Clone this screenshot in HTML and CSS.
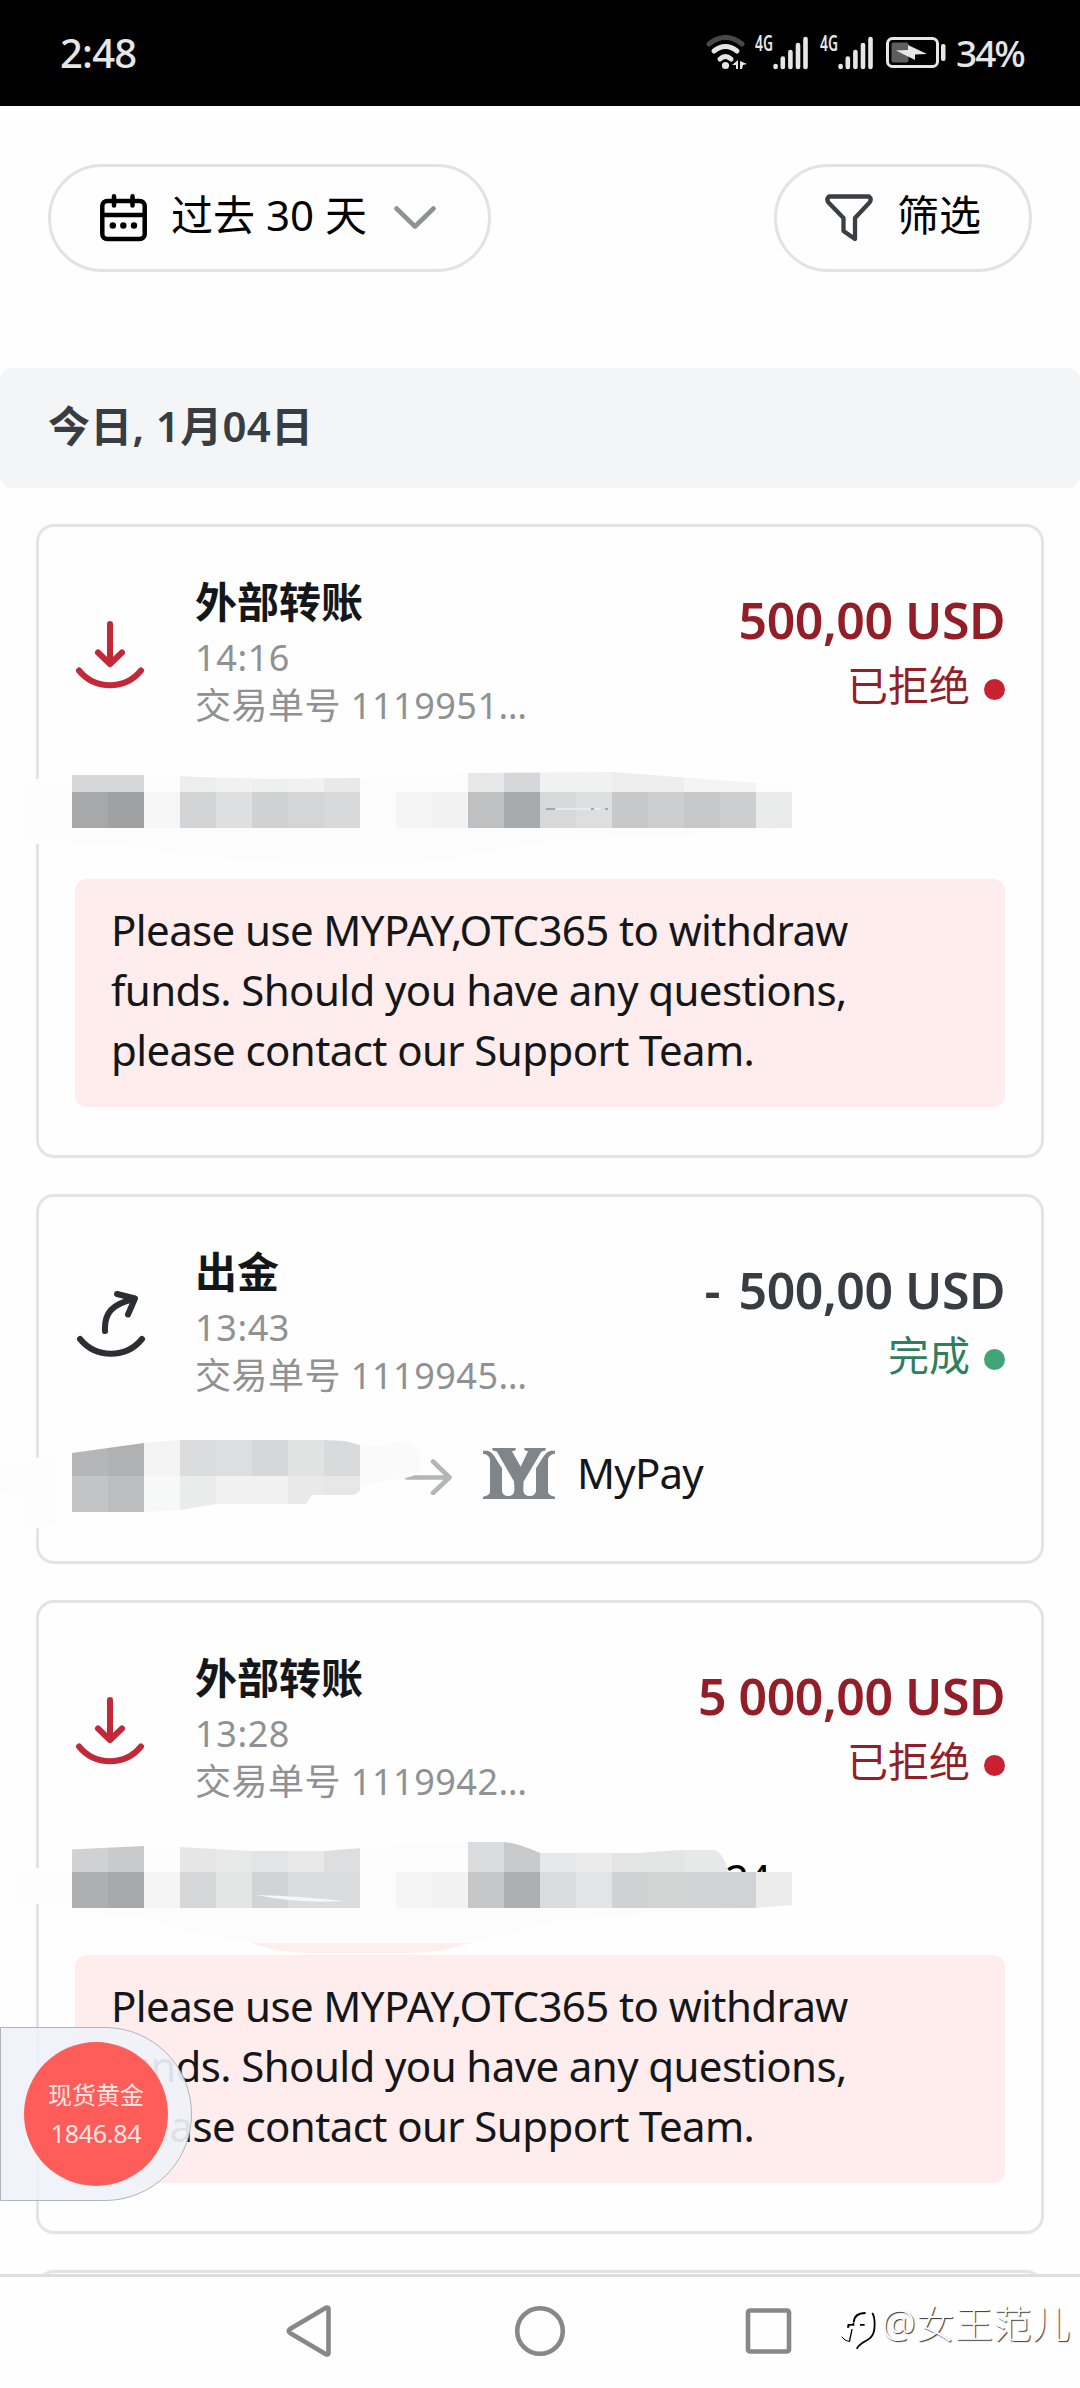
FILE: index.html
```html
<!DOCTYPE html>
<html lang="zh-CN">
<head>
<meta charset="utf-8">
<title>交易记录</title>
<link rel="stylesheet" href="styles.css">
</head>
<body>
<svg class="defs" width="0" height="0" aria-hidden="true">
  <symbol id="incoming" viewBox="0 0 72 72">
    <path d="M36 6V45M24 34.500L36 46L48 34.500M5 52.500A40 40 0 0 0 67 52.500" fill="none" stroke="#c32838" stroke-width="6" stroke-linecap="round" stroke-linejoin="round"/>
  </symbol>
</svg>

<header class="status">
  <span class="clock">2:48</span>
  <div class="indicators">
    <svg class="wifi" viewBox="0 0 42 36" fill="none" stroke-linecap="round">
      <path d="M3 9Q19.500 -4 36 9" stroke="#484848" stroke-width="5"/>
      <path d="M8 16Q19.500 7 31 16M14 24Q19.500 19 25 24" stroke="#e6e6e6" stroke-width="5"/>
      <circle cx="19.500" cy="30.500" r="3.600" fill="#e6e6e6"/>
      <path d="M32 25v9h-2v-4h-4zM34 34v-8l7 3-4 1-1 4z" fill="#e6e6e6"/>
    </svg>
    <svg class="signal" viewBox="0 0 53 36">
      <text x="0" y="16" class="net" textLength="18" lengthAdjust="spacingAndGlyphs">4G</text>
      <path d="M20.600 31v1M27.800 23.500v8.500M35.400 17v15M43 10v22M50.500 4v28" stroke="#e6e6e6" stroke-width="4.600" stroke-linecap="round"/>
    </svg>
    <svg class="signal" viewBox="0 0 53 36">
      <text x="0" y="16" class="net" textLength="18" lengthAdjust="spacingAndGlyphs">4G</text>
      <path d="M20.600 31v1M27.800 23.500v8.500M35.400 17v15M43 10v22M50.500 4v28" stroke="#e6e6e6" stroke-width="4.600" stroke-linecap="round"/>
    </svg>
    <svg class="battery" viewBox="0 0 62 34">
      <rect x="1.500" y="2.500" width="50" height="28" rx="5" fill="none" stroke="#e6e6e6" stroke-width="3"/>
      <rect x="5.500" y="6.500" width="17" height="20" rx="2" fill="#5e5e5e"/>
      <path d="M10 14.500L22 14V9L41 18L29 18.500V24Z" fill="#e6e6e6"/>
      <rect x="55" y="8" width="4.500" height="17" rx="2" fill="#e6e6e6"/>
    </svg>
    <span class="percent">34%</span>
  </div>
</header>

<main class="page">
  <div class="filters">
    <button class="pill range">
      <svg class="calendar" viewBox="0 0 47 48" fill="none" stroke="#000" stroke-width="4.500" stroke-linecap="round">
        <rect x="2.300" y="7" width="42.400" height="38" rx="5"/>
        <path d="M3 21H44M14 2.300V11.500M32.500 2.300V11.500"/>
        <g fill="#000" stroke="none"><circle cx="12.800" cy="31.500" r="3.200"/><circle cx="23.300" cy="31.500" r="3.200"/><circle cx="34" cy="31.500" r="3.200"/></g>
      </svg>
      <span>过去 30 天</span>
      <svg class="chevron" viewBox="0 0 42 24"><path d="M2.500 2.500L21 20.500L39.500 2.500" fill="none" stroke="#8f9192" stroke-width="4.600" stroke-linecap="round" stroke-linejoin="round"/></svg>
    </button>
    <button class="pill pick">
      <svg class="funnel" viewBox="0 0 48 48"><path d="M4 2.500H44Q47 5 44.500 8.500L30 24V45L18.500 37V24L3.500 8.500Q1 5 4 2.500Z" fill="none" stroke="#3a3f44" stroke-width="4.300" stroke-linejoin="round"/></svg>
      <span>筛选</span>
    </button>
  </div>

  <h2 class="date">今日, 1月04日</h2>

  <section class="list">
    <article class="card">
      <div class="head">
        <svg class="kind"><use href="#incoming"/></svg>
        <div class="info"><h3>外部转账</h3><p class="time">14:16</p><p class="id">交易单号 1119951…</p></div>
        <div class="sum rejected"><strong>500,00 USD</strong><span class="state">已拒绝<i></i></span></div>
      </div>
      <div class="route"></div>
      <p class="message">Please use MYPAY,OTC365 to withdraw<br>funds. Should you have any questions,<br>please contact our Support Team.</p>
      <svg class="mask" viewBox="0 760 900 120">
        <clipPath id="c1"><path d="M60 775H144L200 777L270 779L360 778L468 773L612 772L690 778L756 783H800V828L756 832L612 838L540 843L500 849L440 862L300 864L180 855L144 847L60 842Z"/></clipPath>
        <path d="M20 779H72V844H24Q16 812 20 779Z" fill="#fdfdfd"/>
        <g clip-path="url(#c1)">
          <path d="M72 760H792V870H72Z" fill="#fcfcfc"/>
          <path d="M72 760h72v32h-72z" fill="#d6d7d8"/><path d="M180 760h36v32h-36z" fill="#eceded"/><path d="M216 760h36v32h-36z" fill="#f1f1f1"/><path d="M252 760h36v32h-36z" fill="#eeefef"/><path d="M288 760h36v32h-36z" fill="#f1f1f1"/><path d="M324 760h36v32h-36z" fill="#e9e9ea"/>
          <path d="M468 760h36v32h-36z" fill="#e6e7e7"/><path d="M504 760h36v32h-36z" fill="#d5d7d8"/><path d="M540 760h72v32h-72z" fill="#f0f1f1"/><path d="M612 760h72v32h-72z" fill="#ededee"/><path d="M684 760h72v32h-72z" fill="#f4f4f4"/>
          <path d="M72 792h36v36h-36z" fill="#a7a8a9"/><path d="M108 792h36v36h-36z" fill="#9fa1a3"/><path d="M144 792h36v36h-36z" fill="#f6f6f6"/><path d="M180 792h36v36h-36z" fill="#d3d4d6"/><path d="M216 792h36v36h-36z" fill="#dedfe1"/><path d="M252 792h36v36h-36z" fill="#d0d1d2"/><path d="M288 792h36v36h-36z" fill="#d4d5d7"/><path d="M324 792h36v36h-36z" fill="#d8d9db"/>
          <path d="M396 792h36v36h-36z" fill="#f5f5f5"/><path d="M432 792h36v36h-36z" fill="#f2f2f2"/><path d="M468 792h36v36h-36z" fill="#bec0c1"/><path d="M504 792h36v36h-36z" fill="#a7abae"/><path d="M540 792h36v36h-36z" fill="#d7d8da"/><path d="M576 792h36v36h-36z" fill="#dcdee0"/><path d="M612 792h36v36h-36z" fill="#c7c8ca"/><path d="M648 792h36v36h-36z" fill="#ccced0"/><path d="M684 792h36v36h-36z" fill="#c7c8ca"/><path d="M720 792h36v36h-36z" fill="#cdced0"/><path d="M756 792h36v36h-36z" fill="#eaecec"/>
          <path d="M556 809H600" stroke="#eaeaea" stroke-width="2"/><path d="M546 809h9M591 809h3M605 809h3" stroke="#a5a6a8" stroke-width="2"/>
        </g>
      </svg>
    </article>

    <article class="card">
      <div class="head">
        <svg class="kind" viewBox="0 0 72 72"><path d="M31 43C30 25 38 16 60 11M43 6L61 10.500L54 26.500M6 51A40 40 0 0 0 68 51" fill="none" stroke="#2b2f33" stroke-width="6" stroke-linecap="round" stroke-linejoin="round"/></svg>
        <div class="info"><h3>出金</h3><p class="time">13:43</p><p class="id">交易单号 1119945…</p></div>
        <div class="sum done"><strong><span class="minus">-</span> 500,00 USD</strong><span class="state">完成<i></i></span></div>
      </div>
      <div class="route payee">
        <svg class="arrow" viewBox="0 0 54 36"><path d="M8 18.500H50M34 2.500L50.500 18.500L34 34" fill="none" stroke="#b3b5b7" stroke-width="4.600" stroke-linecap="round" stroke-linejoin="round"/></svg>
        <svg class="logo" viewBox="249 39 216 153" fill="#808589">
          <path d="M277 39H347V46L336 49L362 95L384 49L373 46V39H437V46L424 50L370 141V150H343V141L291 50L277 46Z"/>
          <path d="M249 47H262Q275 50 282 62L306 100V168Q308 183 325 183Q341 183 343 168V140H370V168Q372 183 389 183Q406 183 408 168V100L432 62Q440 50 452 47H465V56Q447 58 444 72V172Q446 182 465 185V192H249V185Q268 182 270 172V72Q266 58 249 56Z"/>
        </svg>
        <span>MyPay</span>
      </div>
      <svg class="mask" viewBox="0 1430 900 120">
        <clipPath id="c2"><path d="M60 1455L72 1453L144 1443L180 1440H324L345 1441L360 1445L385 1446Q400 1438 412 1446Q425 1458 420 1470Q417 1476 405 1478L360 1486V1490Q358 1495 350 1495H312L306 1504H216L180 1510L144 1512H60Z"/></clipPath>
        <path d="M0 1462L60 1455V1524L24 1531V1500L0 1493Z" fill="#fdfdfd"/>
        <g clip-path="url(#c2)">
          <path d="M72 1430H440V1520H72Z" fill="#fafafa"/>
          <path d="M72 1430h36v46h-36z" fill="#b5b6b8"/><path d="M108 1430h36v46h-36z" fill="#b0b1b3"/><path d="M144 1430h36v46h-36z" fill="#f4f4f4"/><path d="M180 1430h36v46h-36z" fill="#dbdcde"/><path d="M216 1430h36v46h-36z" fill="#dddedf"/><path d="M252 1430h36v46h-36z" fill="#d6d7d9"/><path d="M288 1430h36v46h-36z" fill="#e1e3e2"/><path d="M324 1430h36v46h-36z" fill="#d8dadb"/>
          <path d="M72 1476h36v36h-36z" fill="#c3c4c6"/><path d="M108 1476h36v36h-36z" fill="#bdbec0"/><path d="M144 1476h36v36h-36z" fill="#f7f8f8"/><path d="M180 1476h36v36h-36z" fill="#eaecec"/><path d="M216 1476h72v36h-72z" fill="#f1f1f1"/><path d="M288 1476h36v36h-36z" fill="#e9e9e9"/><path d="M324 1476h36v36h-36z" fill="#e7e7e7"/>
        </g>
      </svg>
    </article>

    <article class="card">
      <div class="head">
        <svg class="kind"><use href="#incoming"/></svg>
        <div class="info"><h3>外部转账</h3><p class="time">13:28</p><p class="id">交易单号 1119942…</p></div>
        <div class="sum rejected"><strong>5 000,00 USD</strong><span class="state">已拒绝<i></i></span></div>
      </div>
      <div class="route"></div>
      <p class="message">Please use MYPAY,OTC365 to withdraw<br>funds. Should you have any questions,<br>please contact our Support Team.</p>
      <svg class="mask" viewBox="0 1836 900 120">
        <clipPath id="c3"><path d="M60 1850L144 1846L180 1847L250 1851H324L400 1845L468 1842H504Q520 1844 540 1853H640L680 1850H715Q724 1854 728 1872H792V1905L756 1908L612 1916L540 1924L504 1936L468 1943H250L180 1930L144 1918L72 1912H60Z"/></clipPath>
        <text x="725" y="1895" class="account">24</text>
        <path d="M16 1868H72V1904H18Q10 1886 16 1868Z" fill="#fdfdfd"/>
        <path d="M250 1943H472Q440 1953 405 1953H310Q280 1953 250 1943Z" fill="#feeeee"/>
        <g clip-path="url(#c3)">
          <path d="M72 1836H792V1943H72Z" fill="#fcfcfc"/>
          <path d="M72 1836h36v36h-36z" fill="#d0d1d3"/><path d="M108 1836h36v36h-36z" fill="#c9cacc"/><path d="M180 1836h36v36h-36z" fill="#e6e6e7"/><path d="M216 1836h36v36h-36z" fill="#e8eae9"/><path d="M252 1836h36v36h-36z" fill="#e3e4e5"/><path d="M288 1836h36v36h-36z" fill="#e9e9e9"/><path d="M324 1836h36v36h-36z" fill="#dddee0"/>
          <path d="M468 1836h36v36h-36z" fill="#dadbdd"/><path d="M504 1836h36v36h-36z" fill="#c8c9cb"/><path d="M540 1836h36v36h-36z" fill="#e6e7e9"/><path d="M576 1836h36v36h-36z" fill="#ebebec"/><path d="M612 1836h72v36h-72z" fill="#e3e4e4"/><path d="M684 1836h72v36h-72z" fill="#e7e8e8"/>
          <path d="M72 1872h36v36h-36z" fill="#aeafb1"/><path d="M108 1872h36v36h-36z" fill="#a8a9ab"/><path d="M144 1872h36v36h-36z" fill="#f5f5f5"/><path d="M180 1872h36v36h-36z" fill="#d5d7d9"/><path d="M216 1872h36v36h-36z" fill="#e3e6e5"/><path d="M252 1872h36v36h-36z" fill="#d1d3d5"/><path d="M288 1872h36v36h-36z" fill="#dadbdc"/><path d="M324 1872h36v36h-36z" fill="#dbdcde"/>
          <path d="M396 1872h36v36h-36z" fill="#f5f5f5"/><path d="M432 1872h36v36h-36z" fill="#f2f2f2"/><path d="M468 1872h36v36h-36z" fill="#c5c7c8"/><path d="M504 1872h36v36h-36z" fill="#aeafb1"/><path d="M540 1872h36v36h-36z" fill="#dbdcde"/><path d="M576 1872h36v36h-36z" fill="#e2e4e7"/><path d="M612 1872h36v36h-36z" fill="#d0d1d3"/><path d="M648 1872h36v36h-36z" fill="#d3d5d4"/><path d="M684 1872h36v36h-36z" fill="#d2d3d4"/><path d="M720 1872h36v36h-36z" fill="#d1d2d5"/><path d="M756 1872h36v36h-36z" fill="#ececec"/>
          <path d="M256 1895Q300 1896 344 1901Q300 1904 256 1895Z" fill="#f6f6f6"/>
        </g>
      </svg>
    </article>

    <article class="card"></article>
  </section>
</main>

<nav class="nav">
  <svg viewBox="0 0 54 54"><path d="M44.500 4.500V49.500Q44 51 41.500 50L6 29Q3.500 27 6 25L41.500 4Q44 3 44.500 4.500Z" fill="none" stroke="#888" stroke-width="4.600" stroke-linejoin="round"/></svg>
  <svg viewBox="0 0 54 54"><circle cx="27" cy="27" r="22.800" fill="none" stroke="#888" stroke-width="4.600"/></svg>
  <svg viewBox="0 0 54 54"><rect x="6" y="6.500" width="41" height="41" rx="2" fill="none" stroke="#888" stroke-width="4.600"/></svg>
</nav>

<aside class="widget"><div class="quote"><span class="name">现货黄金</span><span class="price">1846.84</span></div></aside>

<div class="watermark">
  <svg viewBox="36 70 108 118" fill="none" stroke="#000" stroke-width="5.500"><path d="M110 76C88 76 75 84 74 105M54 118H58V112H73V106M93 112H107M130 76C140 90 139 128 131 142C121 163 98 158 83 184" /><path d="M69 125L61 163" stroke-width="4"/><path d="M61 163Q46 160 38 148" stroke-width="3"/></svg>
  <span>@女王范儿</span>
</div>
</body>
</html>
```
FILE: styles.css
```css
* { box-sizing: border-box; }
html, body { margin: 0; }
body {
  position: relative;
  width: 1080px;
  height: 2388px;
  overflow: hidden;
  display: flex;
  flex-direction: column;
  background: #fefefe;
  color: #14171a;
  font-family: "Noto Sans", "Noto Sans CJK SC", sans-serif;
}
h2, h3, p { margin: 0; }
svg { display: block; flex: none; }
.defs { position: absolute; }

.status {
  flex: none;
  height: 106px;
  padding: 0 57px 0 60px;
  display: flex;
  justify-content: space-between;
  align-items: center;
  background: #000;
  color: #e6e6e6;
}
.clock { font-size: 40px; font-weight: 500; line-height: 106px; letter-spacing: -0.8px; }
.indicators { display: flex; align-items: center; }
.wifi { width: 42px; height: 36px; margin-right: 7px; }
.signal { width: 53px; height: 36px; margin-right: 12px; }
.net { font: 600 21px "Noto Sans", sans-serif; fill: #e6e6e6; }
.battery { width: 62px; height: 34px; margin-right: 8px; margin-left: 1px; }
.percent { font-size: 37px; font-weight: 500; line-height: 106px; letter-spacing: -2px; width: 67px; }

.page { flex: none; height: 2168px; overflow: hidden; }
.filters {
  padding: 58px 48px 96px;
  display: flex;
  justify-content: space-between;
}
.pill {
  height: 108px;
  border: 3px solid #e2e3e3;
  border-radius: 54px;
  background: #fefefe;
  color: #000;
  display: flex;
  align-items: center;
  padding: 0 0 0 49px;
  font: 400 42px/60px "Noto Sans", "Noto Sans CJK SC", sans-serif;
}
.pill span { position: relative; top: -3px; white-space: nowrap; }
.range { width: 443px; }
.range span { width: 196px; margin-left: 24px; }
.pick { width: 258px; padding-left: 48px; }
.pick span { margin-left: 24px; }
.calendar { width: 47px; height: 48px; }
.chevron { width: 42px; height: 24px; margin-left: 27px; }
.funnel { width: 48px; height: 48px; }

.date {
  height: 120px;
  padding-left: 48px;
  border-radius: 12px;
  background: #f3f5f7;
  color: #373d42;
  font-size: 42px;
  font-weight: 600;
  line-height: 116px;
  letter-spacing: 0.3px;
}

.list { padding: 36px; display: flex; flex-direction: column; gap: 36px; }
.card {
  position: relative;
  flex: none;
  padding: 45px 36px 48px;
  border: 3px solid #e3e4e4;
  border-radius: 18px;
}
.head { display: flex; height: 158px; }
.kind { width: 72px; height: 72px; margin-top: 46px; margin-left: -1px; }
.info { flex: 1; margin-left: 49px; color: #8f9192; font-size: 36px; line-height: 48px; }
.info h3 { color: #14171a; font-size: 42px; font-weight: 600; line-height: 60px; margin-bottom: 2px; }
.time { letter-spacing: 0.6px; }
.id { letter-spacing: 0.5px; }
.sum { padding-top: 16px; display: flex; flex-direction: column; align-items: flex-end; }
.sum strong { font-size: 50px; font-weight: 600; line-height: 64px; letter-spacing: -0.5px; }
.minus { margin-right: 6px; }
.state { margin-top: 3px; display: flex; align-items: center; gap: 14px; font-size: 41px; line-height: 60px; }
.state i { width: 21px; height: 21px; margin-top: 8px; border-radius: 50%; }
.rejected strong { color: #931e27; }
.rejected .state { color: #931e27; }
.rejected i { background: #c92132; }
.done strong { color: #373d42; }
.done .state { color: #2f7f5f; }
.done i { background: #3fa577; }

.route { height: 73px; margin-top: 40px; display: flex; align-items: center; }
.payee { padding-left: 324px; font-size: 42px; line-height: 60px; letter-spacing: -0.8px; }
.payee span { position: relative; top: -4px; }
.arrow { width: 54px; height: 36px; margin: 1px 30px 0 0; }
.logo { width: 72px; height: 51px; margin: -6px 22px 0 0; }
.message {
  margin-top: 36px;
  padding: 21px 36px 27px;
  border-radius: 12px;
  background: #ffecec;
  font-size: 42px;
  line-height: 60px;
  letter-spacing: -0.6px;
  white-space: nowrap;
}
.mask { position: absolute; left: -39px; top: 233px; width: 900px; height: 120px; }
.account { font: 400 42px "Noto Sans", sans-serif; letter-spacing: -2px; }

.nav {
  flex: none;
  height: 114px;
  border-top: 3px solid #dedede;
  background: #fefefe;
  padding: 0 284px 3px;
  display: flex;
  justify-content: space-between;
  align-items: center;
}
.nav svg { width: 54px; height: 54px; }

.widget {
  position: absolute;
  left: 0;
  top: 2027px;
  width: 192px;
  height: 174px;
  display: flex;
  align-items: center;
  padding-left: 23px;
  border: 1px solid #b0b4bb;
  border-radius: 0 87px 87px 0;
  background: rgba(239, 242, 248, 0.92);
}
.quote {
  width: 144px;
  height: 144px;
  border-radius: 50%;
  background: #ff5d59;
  color: #ffe6e4;
  display: flex;
  flex-direction: column;
  align-items: center;
  justify-content: center;
  font-size: 24px;
  line-height: 38px;
}
.price { font-size: 25px; letter-spacing: -0.3px; }

.watermark {
  position: absolute;
  right: 9px;
  top: 2294px;
  display: flex;
  align-items: center;
  gap: 5px;
  color: #fff;
  font-size: 38px;
  font-weight: 300;
  line-height: 58px;
  letter-spacing: 0.7px;
  text-shadow: 1px 1px 1px #333;
}
.watermark svg { width: 36px; height: 39px; margin-top: 15px; }
```
